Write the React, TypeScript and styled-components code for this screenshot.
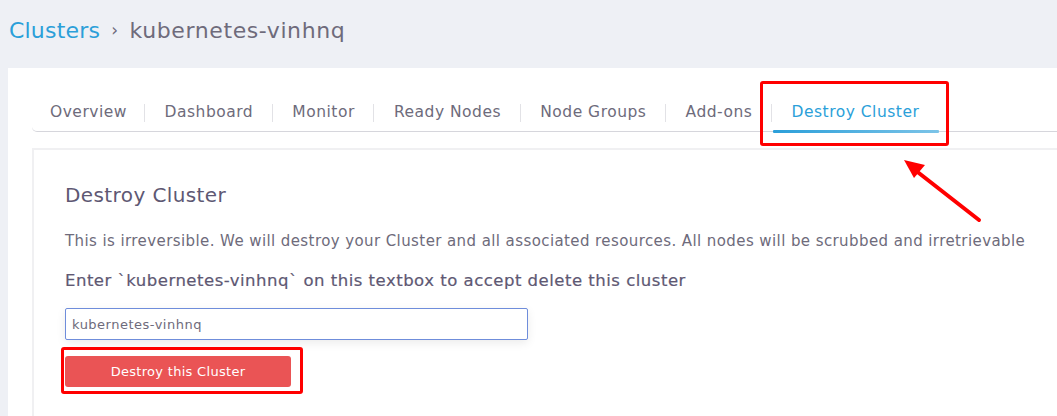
import React from "react";
import styled, { createGlobalStyle } from "styled-components";

const GlobalStyle = createGlobalStyle`
  html, body { margin: 0; padding: 0; }
  body {
    background: #eef0f5;
    font-family: "DejaVu Sans", "Open Sans", sans-serif;
    color: #6e6b7b;
  }
  * { box-sizing: border-box; }
`;

const Page = styled.div`
  position: relative;
  width: 1057px;
  height: 416px;
  overflow: hidden;
`;

const Breadcrumb = styled.div`
  height: 68px;
  display: flex;
  align-items: center;
  gap: 11px;
  padding: 0 0 8px 9px;
  font-size: 22px;
  letter-spacing: 0.6px;
`;

const Crumb = styled.span<{ $link?: boolean }>`
  color: ${(p) => (p.$link ? "#2b9fd9" : "#6e6b7b")};
  letter-spacing: ${(p) => (p.$link ? "0.2px" : "0.6px")};
`;

const Chevron = styled.span`
  color: #6e6b7b;
  font-size: 17px;
`;

const Panel = styled.div`
  margin-left: 8px;
  background: #ffffff;
  padding: 24px 0 0 24px;
  height: 348px;
`;

const TabBar = styled.div`
  display: flex;
  height: 40px;
  border-bottom: 1px solid #d6d6dc;
  border-bottom-left-radius: 5px;
`;

const Tab = styled.div<{ $active?: boolean; $first?: boolean }>`
  position: relative;
  display: flex;
  align-items: center;
  padding: 0 ${(p) => (p.$first ? "18px" : "19.6px")};
  font-size: 15.5px;
  letter-spacing: 0.5px;
  color: ${(p) => (p.$active ? "#2b9fd9" : "#6e6b7b")};
  white-space: nowrap;
  &:not(:last-child)::after {
    content: "";
    position: absolute;
    right: 0;
    top: 12px;
    height: 18px;
    width: 1px;
    background: #e2e2e6;
  }
  ${(p) =>
    p.$active &&
    `&::before {
      content: "";
      position: absolute;
      left: 1px;
      right: 0;
      bottom: -2px;
      height: 3px;
      border-radius: 1px;
      background: linear-gradient(90deg, #2b9fd9, #7cc4e8);
    }`}
`;

const Card = styled.div`
  margin-top: 16px;
  border-top: 2px solid #f0f0f2;
  border-left: 2px solid #f0f0f2;
  padding: 31px 0 0 31px;
  height: 300px;
`;

const Heading = styled.h2`
  margin: 0;
  font-size: 20px;
  font-weight: 400;
  color: #5e5873;
  line-height: 28px;
  letter-spacing: 0.4px;
`;

const Paragraph = styled.p`
  margin: 21px 0 0;
  font-size: 15px;
  line-height: 22px;
  color: #6e6b7b;
  letter-spacing: 0.41px;
  white-space: nowrap;
`;

const Label = styled.label`
  display: block;
  margin-top: 18px;
  font-size: 16.5px;
  line-height: 22px;
  letter-spacing: 0.5px;
  color: #5e5873;
  -webkit-text-stroke: 0.2px #5e5873;
`;

const Input = styled.input`
  display: block;
  margin-top: 16px;
  width: 463px;
  height: 32px;
  border: 1px solid #6f8ddb;
  border-radius: 2px;
  padding: 0 6px;
  font-family: inherit;
  font-size: 13px;
  letter-spacing: 0.5px;
  color: #6e6b7b;
  box-shadow: 0 3px 10px rgba(0, 0, 0, 0.08);
  outline: none;
`;

const DangerButton = styled.button`
  display: block;
  margin-top: 16px;
  width: 226px;
  height: 31px;
  border: none;
  border-radius: 3px;
  background: #ea5455;
  color: #ffffff;
  font-family: inherit;
  font-size: 13px;
  letter-spacing: 0.3px;
  cursor: pointer;
`;

const Highlight = styled.div<{ $x: number; $y: number; $w: number; $h: number }>`
  position: absolute;
  left: ${(p) => p.$x}px;
  top: ${(p) => p.$y}px;
  width: ${(p) => p.$w}px;
  height: ${(p) => p.$h}px;
  border: 3px solid #ff0000;
  border-radius: 3px;
  pointer-events: none;
`;

const ArrowSvg = styled.svg`
  position: absolute;
  left: 895px;
  top: 150px;
  pointer-events: none;
`;

const tabs = ["Overview", "Dashboard", "Monitor", "Ready Nodes", "Node Groups", "Add-ons", "Destroy Cluster"];

export default function App() {
  return (
    <Page>
      <GlobalStyle />
      <Breadcrumb>
        <Crumb $link>Clusters</Crumb>
        <Chevron>›</Chevron>
        <Crumb>kubernetes-vinhnq</Crumb>
      </Breadcrumb>
      <Panel>
        <TabBar>
          {tabs.map((t, i) => (
            <Tab key={t} $first={i === 0} $active={t === "Destroy Cluster"}>
              {t}
            </Tab>
          ))}
        </TabBar>
        <Card>
          <Heading>Destroy Cluster</Heading>
          <Paragraph>
            This is irreversible. We will destroy your Cluster and all associated resources. All nodes will be scrubbed and irretrievable
          </Paragraph>
          <Label>Enter `kubernetes-vinhnq` on this textbox to accept delete this cluster</Label>
          <Input defaultValue="kubernetes-vinhnq" />
          <DangerButton>Destroy this Cluster</DangerButton>
        </Card>
      </Panel>
      <Highlight $x={760} $y={81} $w={189} $h={65} />
      <Highlight $x={61} $y={347} $w={242} $h={47} />
      <ArrowSvg width="95" height="80" viewBox="0 0 95 80">
        <line x1="84" y1="70" x2="20" y2="20" stroke="#ff0000" strokeWidth="4" strokeLinecap="round" />
        <polygon points="9,10 30,15 19,28" fill="#ff0000" />
      </ArrowSvg>
    </Page>
  );
}
